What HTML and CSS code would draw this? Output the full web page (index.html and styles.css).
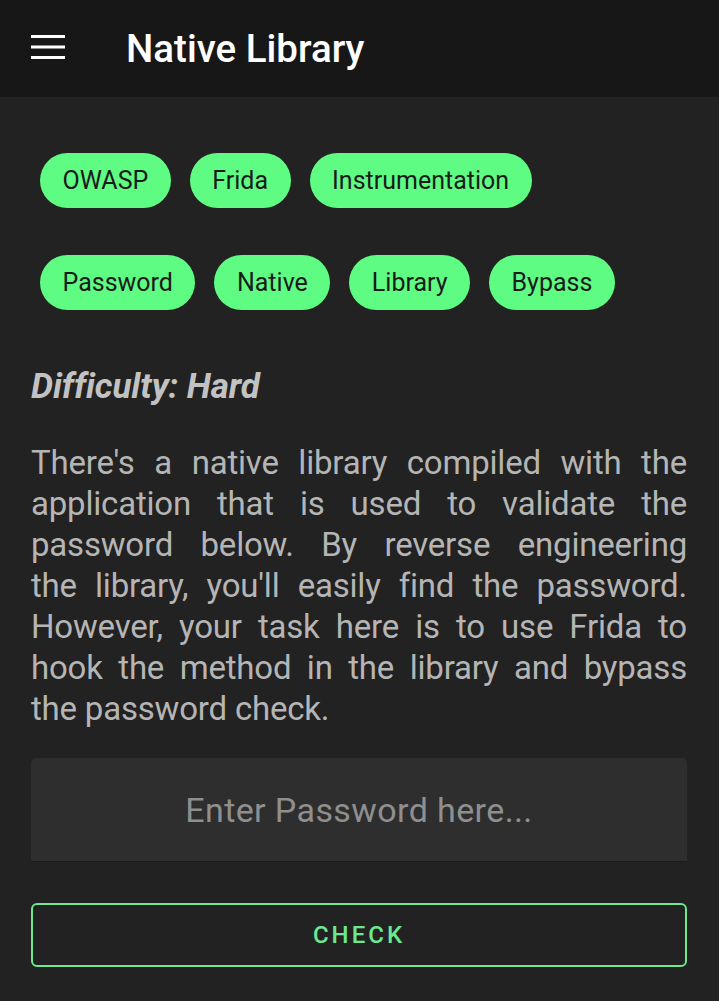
FILE: index.html
```html
<!DOCTYPE html>
<html>
<head>
<meta charset="utf-8">
<link rel="stylesheet" href="styles.css">
</head>
<body>
<header class="appbar">
  <svg class="menu" width="34" height="24" viewBox="0 0 34 24"><rect x="0" y="0" width="34" height="3" fill="#fff"/><rect x="0" y="10.5" width="34" height="3" fill="#fff"/><rect x="0" y="21" width="34" height="3" fill="#fff"/></svg>
  <h1 class="title">Native Library</h1>
</header>
<main class="content">
  <div class="chips">
    <span class="chip">OWASP</span><span class="chip">Frida</span><span class="chip">Instrumentation</span>
  </div>
  <div class="chips chips-last">
    <span class="chip">Password</span><span class="chip">Native</span><span class="chip">Library</span><span class="chip">Bypass</span>
  </div>
  <p class="difficulty">Difficulty: Hard</p>
  <p class="desc"><span class="line">There's a native library compiled with the</span> <span class="line">application that is used to validate the</span> <span class="line">password below. By reverse engineering</span> <span class="line">the library, you'll easily find the password.</span> <span class="line">However, your task here is to use Frida to</span> <span class="line">hook the method in the library and bypass</span> <span class="line line-last">the password check.</span></p>
  <div class="field"><span class="placeholder">Enter Password here...</span></div>
  <button class="check">CHECK</button>
</main>
</body>
</html>
```
FILE: styles.css
```css
html, body { margin: 0; padding: 0; }
body { background: #222222; font-family: Roboto, "Noto Sans", sans-serif; width: 719px; height: 1001px; overflow: hidden; }
.appbar { height: 97px; background: #171717; display: flex; align-items: center; }
.menu { margin-left: 31px; margin-top: -3px; }
.title { margin: 0 0 0 61px; color: #fff; font-size: 38.5px; font-weight: 500; line-height: 44px; }
.content { padding: 56px 32px 0 31px; }
.chips { display: flex; gap: 19px; margin-left: 9px; margin-bottom: 47px; }
.chips-last { margin-bottom: 0; }
.chip { background: #5efc82; color: #1b1b1b; font-size: 25px; height: 55px; line-height: 55px; padding: 0 22.5px; border-radius: 28px; }
.difficulty { margin: 57px 0 0; color: #c2c2c2; font-size: 35px; font-weight: 700; font-style: italic; letter-spacing: -0.1px; line-height: 40px; }
.desc { margin: 35px 0 0; color: #b5b5b5; font-size: 33px; line-height: 41px; letter-spacing: -0.2px; }
.line { display: block; white-space: nowrap; text-align: justify; text-align-last: justify; }
.line-last { text-align-last: left; }
.field { margin-top: 29px; height: 103px; background: #2e2e2e; border-radius: 5px 5px 0 0; border-bottom: 1px solid #1c1c1c; display: flex; align-items: center; justify-content: center; }
.placeholder { color: #8f8f8f; font-size: 34px; letter-spacing: 0.4px; }
.check { margin-top: 41px; width: 100%; height: 64px; background: transparent; border: 2px solid #6ce891; border-radius: 6px; color: #6ce891; font-family: Roboto, sans-serif; font-size: 24px; font-weight: 500; letter-spacing: 3px; display: block; }
```
